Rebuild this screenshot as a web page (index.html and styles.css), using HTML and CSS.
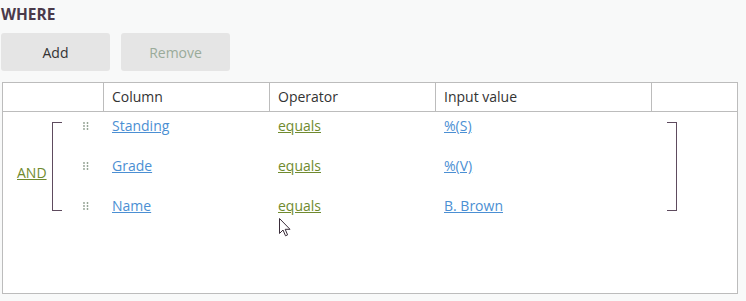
FILE: index.html
```html
<!DOCTYPE html>
<html lang="en">
<head>
  <meta charset="UTF-8">
  <title>Where</title>
  <link rel="stylesheet" href="styles.css">
</head>
<body>
  <h4 class="title">WHERE</h4>

  <div class="actions">
    <button class="btn">Add</button>
    <button class="btn disabled">Remove</button>
  </div>

  <div class="grid">
    <div class="grid-head">
      <div class="cell first"></div>
      <div class="cell">Column</div>
      <div class="cell">Operator</div>
      <div class="cell wide">Input value</div>
      <div class="cell last"></div>
    </div>

    <div class="group">
      <div class="group-op"><a href="#" class="op">AND</a></div>
      <div class="bracket left"></div>
      <div class="rows">
        <div class="row">
          <span class="handle"><svg width="6" height="8" viewBox="0 0 6 8"><circle cx="1" cy="1" r="0.9"/><circle cx="4.5" cy="1" r="0.9"/><circle cx="1" cy="4" r="0.9"/><circle cx="4.5" cy="4" r="0.9"/><circle cx="1" cy="7" r="0.9"/><circle cx="4.5" cy="7" r="0.9"/></svg></span>
          <a href="#" class="field">Standing</a>
          <a href="#" class="op">equals</a>
          <a href="#" class="field">%(S)</a>
        </div>
        <div class="row">
          <span class="handle"><svg width="6" height="8" viewBox="0 0 6 8"><circle cx="1" cy="1" r="0.9"/><circle cx="4.5" cy="1" r="0.9"/><circle cx="1" cy="4" r="0.9"/><circle cx="4.5" cy="4" r="0.9"/><circle cx="1" cy="7" r="0.9"/><circle cx="4.5" cy="7" r="0.9"/></svg></span>
          <a href="#" class="field">Grade</a>
          <a href="#" class="op">equals</a>
          <a href="#" class="field">%(V)</a>
        </div>
        <div class="row">
          <span class="handle"><svg width="6" height="8" viewBox="0 0 6 8"><circle cx="1" cy="1" r="0.9"/><circle cx="4.5" cy="1" r="0.9"/><circle cx="1" cy="4" r="0.9"/><circle cx="4.5" cy="4" r="0.9"/><circle cx="1" cy="7" r="0.9"/><circle cx="4.5" cy="7" r="0.9"/></svg></span>
          <a href="#" class="field">Name</a>
          <a href="#" class="op">equals</a>
          <a href="#" class="field">B. Brown</a>
        </div>
      </div>
      <div class="bracket right"></div>
    </div>
  </div>

  <svg class="cursor" width="12" height="19" viewBox="0 0 12 19">
    <path d="M0.5 0.5 L0.5 15.5 L4 12 L6.5 17.8 L8.6 16.9 L6.2 11.3 L11 11.3 Z" fill="#fff" stroke="#3a2d3a" stroke-width="1"/>
  </svg>
</body>
</html>
```

FILE: styles.css
```css
body {
  margin: 0;
  padding: 0;
  background: #f8f9f9;
  font-family: "Open Sans", Arial, sans-serif;
  font-size: 14px;
  color: #333;
  position: relative;
}

.title {
  margin: 0;
  padding: 3px 0 0 1px;
  height: 25px;
  box-sizing: border-box;
  font-size: 15.5px;
  font-weight: bold;
  color: #4a3a4a;
}

.actions {
  display: flex;
  gap: 11px;
  padding: 8px 0 0 1px;
}

.btn {
  width: 109px;
  height: 38px;
  border: none;
  border-radius: 3px;
  background: #e5e5e5;
  color: #333;
  font-family: inherit;
  font-size: 14px;
  cursor: pointer;
}

.btn.disabled {
  color: #9aab9a;
}

.grid {
  margin: 11px 0 0 2px;
  width: 736px;
  height: 212px;
  box-sizing: border-box;
  border: 1px solid #bcbcbc;
  background: #fff;
}

.grid-head {
  display: flex;
  height: 29px;
  border-bottom: 1px solid #bcbcbc;
  box-sizing: border-box;
}

.cell {
  box-sizing: border-box;
  width: 166px;
  border-right: 1px solid #bcbcbc;
  padding: 4px 0 0 8px;
  line-height: 20px;
}

.cell.first { width: 101px; }
.cell.wide { width: 216px; }
.cell.last { flex: 1; border-right: none; }

.group {
  display: flex;
  margin-top: 4px;
}

.group-op {
  width: 49px;
  padding: 12px 0 0 14px;
  box-sizing: border-box;
  align-self: center;
}

.bracket {
  width: 10px;
  margin: 6px 0 5px;
  border: 1.5px solid #5e4b5e;
  box-sizing: border-box;
}

.bracket.left { border-right: none; }
.bracket.right { border-left: none; }

.rows {
  width: 605px;
  display: flex;
  flex-direction: column;
  gap: 20px;
}

.row {
  display: grid;
  grid-template-columns: 50px 166px 166px 1fr;
  line-height: 20px;
  align-items: center;
}

.row a {
  justify-self: start;
}

.handle {
  padding-left: 21px;
  display: flex;
}

.handle svg {
  fill: #8f9f8f;
}

a.field {
  color: #4b8fd3;
}

a.op {
  color: #6f8a2e;
}

.cursor {
  position: absolute;
  left: 279px;
  top: 218px;
}
```
